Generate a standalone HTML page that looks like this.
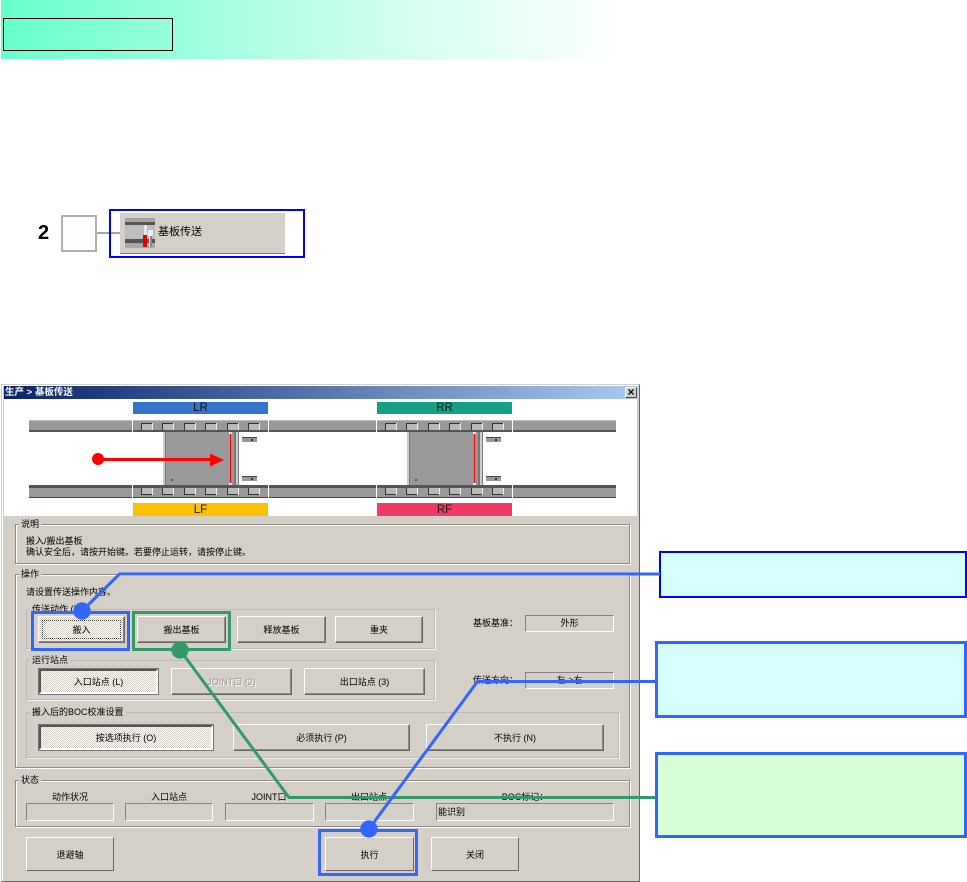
<!DOCTYPE html>
<html><head><meta charset="utf-8">
<style>
html,body{margin:0;padding:0;background:#fff;width:967px;height:882px;overflow:hidden}
body{position:relative;font-family:"Liberation Sans","WenQuanYi Zen Hei","Noto Sans CJK SC",sans-serif;font-size:9px;color:#000}
div{box-sizing:border-box;position:absolute}
.t{white-space:nowrap;line-height:12px;height:12px}
.c{text-align:center}
.g{border:1px solid #8c8a85;box-shadow:inset 1px 1px 0 #fff,1px 1px 0 #fff}
.g2{border:1px solid #bdbbb5;box-shadow:1px 1px 0 #f4f3f0}
.lb{background:#d4d0c8;padding:0 2px}
.b{background:#d4d0c8;border:1px solid;border-color:#fff #666 #666 #fff;box-shadow:inset -1px -1px 0 #8a8a8a;display:flex;align-items:center;justify-content:center;white-space:nowrap}
.p{box-shadow:none;border-color:#fff #555 #555 #fff;border-width:1px 2px 2px 1px;border-right-color:#666;border-bottom-color:#666}
.s{background:repeating-conic-gradient(#fff 0 25%,#d4d0c8 0 50%) 0 0/2px 2px;border:2px solid;border-color:#555 #fff #fff #555;outline:1px solid #777;display:flex;align-items:center;justify-content:center;white-space:nowrap}
.f{border:1px solid;border-color:#858380 #fff #fff #858380;text-align:center;line-height:15px;white-space:nowrap}
.bar{display:flex;align-items:center;justify-content:center;font-size:11.5px;color:#111}
</style></head><body>

<div style="left:1px;top:0;width:620px;height:59px;background:linear-gradient(90deg,#66ffcc 0%,#c0ffe8 51%,#fff 100%)"></div>
<div style="left:3px;top:18px;width:170px;height:33px;border:1px solid #000"></div>

<div style="left:38px;top:222px;font:bold 20px/23px 'Liberation Sans',sans-serif">2</div>
<div style="left:61px;top:215px;width:36px;height:37px;border:2px solid #b0b0b0;background:#fcfefc"></div>
<div style="left:97px;top:232px;width:23px;height:2px;background:#a5a5a5"></div>
<div style="left:109px;top:209px;width:196px;height:49px;border:2px solid #0000ff"></div>
<div style="left:120px;top:213px;width:165px;height:41px;background:#d4d0c8;border-bottom:1px solid #77756f"></div>
<svg style="position:absolute;left:125px;top:218px" width="30" height="30" shape-rendering="crispEdges">
<rect width="30" height="30" fill="#bdbdbd"/><rect width="30" height="4" fill="#a3a3a3"/><rect y="4" width="30" height="3" fill="#555"/><rect y="21" width="30" height="4" fill="#555"/><rect y="25" width="30" height="5" fill="#a8a8a8"/>
<rect x="19" y="7" width="3" height="10" fill="#e8e8e8"/><rect x="18" y="17" width="4" height="12" fill="#d00"/>
<rect x="23" y="12" width="5" height="6" fill="#eee"/><rect x="25" y="18" width="2" height="11" fill="#888"/><rect x="24" y="18" width="1" height="11" fill="#ddd"/>
</svg>
<div class="t" style="left:158px;top:226px;font-size:11px">基板传送</div>

<!-- dialog -->
<div style="left:1px;top:384px;width:639px;height:498px;background:#d4d0c8;border:1px solid;border-color:#d4d0c8 #666 #666 #d4d0c8;box-shadow:inset 1px 1px 0 #fff"></div>
<div style="left:4px;top:386px;width:633px;height:13px;background:linear-gradient(90deg,#0a246a,#a6caf0)"></div>
<div class="t" style="left:5px;top:387px;color:#fff;font-size:9.5px;font-weight:bold">生产 &gt; 基板传送</div>
<div style="left:625px;top:387px;width:12px;height:11px;background:#d4d0c8;border:1px solid;border-color:#fff #444 #444 #fff;font:bold 12px/9px 'Liberation Sans';text-align:center">×</div>
<div style="left:4px;top:399px;width:633px;height:117px;background:#fff"></div>

<div class="bar" style="left:133px;top:402px;width:135px;height:12px;background:#3575c8">LR</div>
<div class="bar" style="left:377px;top:402px;width:135px;height:12px;background:#14a085">RR</div>
<div class="bar" style="left:133px;top:503px;width:135px;height:13px;background:#ffc000">LF</div>
<div class="bar" style="left:377px;top:503px;width:135px;height:13px;background:#f23a66">RF</div>

<svg style="position:absolute;left:0;top:0" width="640" height="520" shape-rendering="crispEdges">
<defs>
<g id="tab"><rect width="11" height="7" fill="#b8b8b8"/><rect width="11" height="1" fill="#333"/><rect width="1" height="7" fill="#333"/><rect x="11" width="1" height="7" fill="#eee"/></g>
<g id="tabb"><rect width="11" height="7" fill="#b8b8b8"/><rect y="6" width="11" height="1" fill="#333"/><rect width="1" height="7" fill="#333"/><rect x="11" width="1" height="7" fill="#eee"/></g>
<g id="unit">
<rect x="29" y="420" width="103" height="10" fill="#999"/><rect x="29" y="420" width="103" height="1" fill="#bbb"/><rect x="29" y="430" width="103" height="2" fill="#555"/>
<rect x="133" y="420" width="135" height="10" fill="#999"/><rect x="133" y="420" width="135" height="1" fill="#bbb"/><rect x="133" y="430" width="135" height="2" fill="#555"/>
<rect x="269" y="420" width="103" height="10" fill="#999"/><rect x="269" y="420" width="103" height="1" fill="#bbb"/><rect x="269" y="430" width="103" height="2" fill="#555"/>
<use href="#tab" x="141" y="423"/><use href="#tab" x="162" y="423"/><use href="#tab" x="184" y="423"/><use href="#tab" x="205" y="423"/><use href="#tab" x="227" y="423"/><use href="#tab" x="248" y="423"/>
<rect x="29" y="485" width="103" height="3" fill="#555"/><rect x="29" y="488" width="103" height="10" fill="#999"/><rect x="29" y="497" width="103" height="1" fill="#444"/>
<rect x="133" y="485" width="135" height="3" fill="#555"/><rect x="133" y="488" width="135" height="10" fill="#999"/><rect x="133" y="497" width="135" height="1" fill="#444"/>
<rect x="269" y="485" width="103" height="3" fill="#555"/><rect x="269" y="488" width="103" height="10" fill="#999"/><rect x="269" y="497" width="103" height="1" fill="#444"/>
<use href="#tabb" x="141" y="488"/><use href="#tabb" x="162" y="488"/><use href="#tabb" x="184" y="488"/><use href="#tabb" x="205" y="488"/><use href="#tabb" x="227" y="488"/><use href="#tabb" x="248" y="488"/>
<rect x="163" y="432" width="76" height="53" fill="#999"/>
<rect x="163" y="432" width="2" height="53" fill="#ccc"/><rect x="165" y="432" width="1" height="53" fill="#777"/>
<rect x="234" y="432" width="2" height="53" fill="#777"/><rect x="236" y="432" width="2" height="53" fill="#ccc"/><rect x="238" y="432" width="1" height="53" fill="#777"/>
<rect x="230" y="434" width="1" height="51" fill="#f00"/><rect x="229" y="432" width="3" height="2" fill="#eee"/><rect x="229" y="483" width="3" height="2" fill="#eee"/>
<rect x="242" y="437" width="15" height="5" fill="#999"/><rect x="242" y="437" width="15" height="1" fill="#444"/><rect x="251" y="439" width="2" height="2" fill="#333"/>
<rect x="242" y="476" width="15" height="5" fill="#999"/><rect x="242" y="476" width="15" height="1" fill="#444"/><rect x="251" y="478" width="2" height="2" fill="#333"/>
<rect x="171" y="479" width="2" height="2" fill="#555"/>
</g>
</defs>
<use href="#unit"/>
<use href="#unit" x="244"/>
<g shape-rendering="auto"><circle cx="98" cy="459" r="6" fill="#f00"/><rect x="98" y="458" width="113" height="3" fill="#f00"/><path d="M210 453.500L224 460L210 466.500Z" fill="#f00"/></g>
</svg>

<!-- 说明 -->
<div class="g" style="left:15px;top:524px;width:615px;height:40px"></div>
<div class="t lb" style="left:19px;top:518px">说明</div>
<div class="t" style="left:26px;top:535px">搬入/搬出基板</div>
<div class="t" style="left:26px;top:546px">确认安全后，请按开始键。若要停止运转，请按停止键。</div>

<!-- 操作 -->
<div class="g" style="left:15px;top:574px;width:615px;height:194px"></div>
<div class="t lb" style="left:19px;top:568px">操作</div>
<div class="t" style="left:26px;top:586px">请设置传送操作内容。</div>

<div class="g2" style="left:26px;top:609px;width:409px;height:40px"></div>
<div class="t lb" style="left:30px;top:603px">传送动作 (I)</div>
<div class="b" style="left:38px;top:616px;width:87px;height:27px;background:repeating-conic-gradient(#fff 0 25%,#d4d0c8 0 50%) 0 0/2px 2px;outline:1px dotted #333;outline-offset:-5px">搬入</div>
<div class="b" style="left:137px;top:616px;width:89px;height:27px">搬出基板</div>
<div class="b" style="left:237px;top:616px;width:89px;height:27px">释放基板</div>
<div class="b" style="left:335px;top:616px;width:88px;height:27px">重夹</div>

<div class="t" style="left:473px;top:617px">基板基准：</div>
<div class="f" style="left:525px;top:615px;width:89px;height:17px">外形</div>
<div class="t" style="left:473px;top:674px">传送方向：</div>
<div class="f" style="left:525px;top:672px;width:89px;height:17px">左-&gt;右</div>

<div class="g2" style="left:26px;top:660px;width:409px;height:40px"></div>
<div class="t lb" style="left:30px;top:654px">运行站点</div>
<div class="s" style="left:39px;top:669px;width:119px;height:25px">入口站点 (L)</div>
<div class="b" style="left:171px;top:668px;width:121px;height:27px;color:#999;text-shadow:1px 1px 0 #fff">JOINT口 (2)</div>
<div class="b" style="left:304px;top:668px;width:121px;height:27px">出口站点 (3)</div>

<div class="g2" style="left:26px;top:712px;width:593px;height:46px"></div>
<div class="t lb" style="left:30px;top:706px">搬入后的BOC校准设置</div>
<div class="s" style="left:39px;top:725px;width:174px;height:25px">按选项执行 (O)</div>
<div class="b" style="left:233px;top:724px;width:177px;height:27px">必须执行 (P)</div>
<div class="b" style="left:426px;top:724px;width:178px;height:27px">不执行 (N)</div>

<!-- 状态 -->
<div class="g" style="left:15px;top:780px;width:615px;height:47px"></div>
<div class="t lb" style="left:19px;top:774px">状态</div>
<div class="t c" style="left:26px;top:791px;width:88px">动作状况</div>
<div class="t c" style="left:125px;top:791px;width:88px">入口站点</div>
<div class="t c" style="left:225px;top:791px;width:88px">JOINT口</div>
<div class="t c" style="left:325px;top:791px;width:88px">出口站点</div>
<div class="t c" style="left:436px;top:791px;width:178px">BOC标记：</div>
<div class="f" style="left:26px;top:803px;width:88px;height:18px"></div>
<div class="f" style="left:125px;top:803px;width:88px;height:18px"></div>
<div class="f" style="left:225px;top:803px;width:89px;height:18px"></div>
<div class="f" style="left:325px;top:803px;width:89px;height:18px"></div>
<div class="f" style="left:436px;top:803px;width:178px;height:18px;text-align:left;line-height:16px;padding-left:1px">能识别</div>

<div class="b" style="left:26px;top:837px;width:88px;height:34px;box-shadow:none">退避轴</div>
<div class="b" style="left:325px;top:837px;width:89px;height:34px;box-shadow:none">执行</div>
<div class="b" style="left:431px;top:837px;width:88px;height:34px;box-shadow:none">关闭</div>

<!-- callouts -->
<div style="left:659px;top:551px;width:308px;height:47px;background:#d5ffff;border:2px solid #0000ff"></div>
<div style="left:655px;top:641px;width:312px;height:77px;background:#d5ffff;border:3px solid #3366ff"></div>
<div style="left:655px;top:752px;width:312px;height:86px;background:#d7ffd7;border:3px solid #3366ff"></div>

<svg style="position:absolute;left:0;top:0" width="967" height="882" fill="none">
<g stroke-width="3">
<path d="M82 611L119.500 574H660" stroke="#3366ff"/>
<path d="M180 650L289 797.500H656" stroke="#339966"/>
<path d="M369 829L477.500 681.500H656" stroke="#3366ff"/>
<rect x="32.500" y="612.500" width="96" height="37" stroke="#3366ff"/>
<rect x="133.500" y="612.500" width="96" height="37" stroke="#339966"/>
<rect x="319.500" y="830.500" width="97" height="44" stroke="#3366ff"/>
</g>
<circle cx="82" cy="611" r="8.700" fill="#3366ff"/>
<circle cx="180" cy="650" r="8.700" fill="#339966"/>
<circle cx="369" cy="829" r="8.700" fill="#3366ff"/>
</svg>
</body></html>
